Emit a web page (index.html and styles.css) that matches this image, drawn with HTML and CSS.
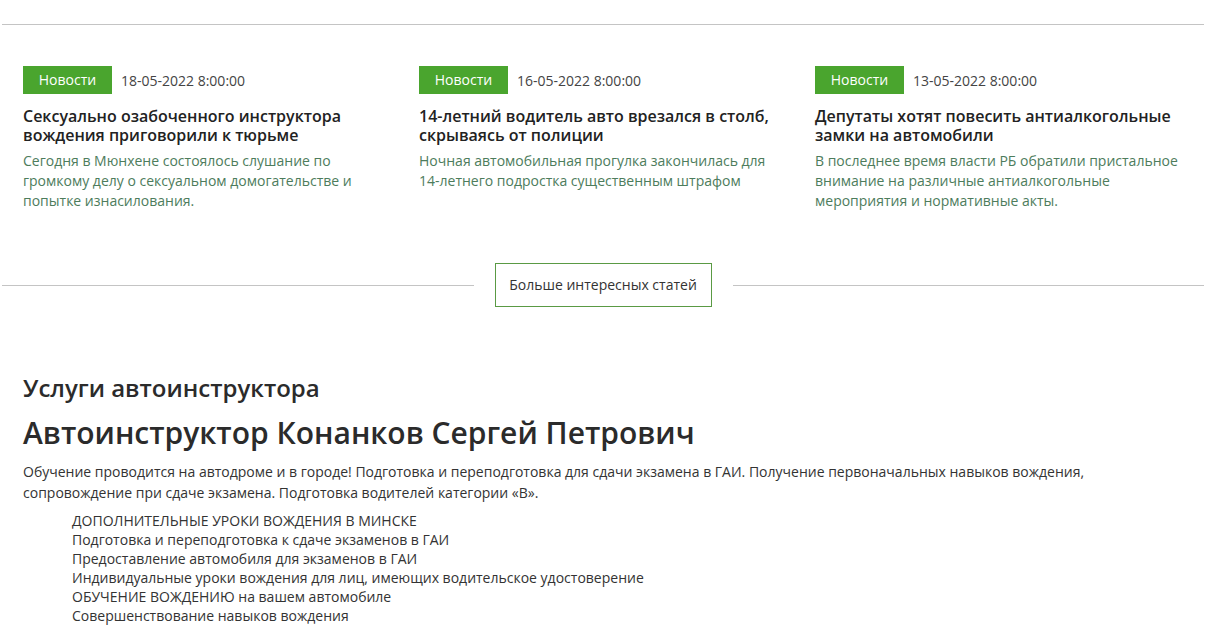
FILE: index.html
```html
<!DOCTYPE html>
<html lang="ru">
<head>
    <meta charset="UTF-8">
    <meta name="viewport" content="width=device-width, initial-scale=1.0">
    <title>Автоинструктор</title>
    <link rel="stylesheet" href="styles.css">
</head>
<body>
    <div class="page">
        <hr class="top-line">

        <!-- News cards -->
        <div class="news">
            <div class="news-item">
                <div class="news-meta">
                    <span class="badge">Новости</span>
                    <span class="date">18-05-2022 8:00:00</span>
                </div>
                <h3 class="news-title">Сексуально озабоченного инструктора вождения приговорили к тюрьме</h3>
                <p class="news-text">Сегодня в Мюнхене состоялось слушание по громкому делу о сексуальном домогательстве и попытке изнасилования.</p>
            </div>
            <div class="news-item">
                <div class="news-meta">
                    <span class="badge">Новости</span>
                    <span class="date">16-05-2022 8:00:00</span>
                </div>
                <h3 class="news-title">14-летний водитель авто врезался в столб, скрываясь от полиции</h3>
                <p class="news-text">Ночная автомобильная прогулка закончилась для 14-летнего подростка существенным штрафом</p>
            </div>
            <div class="news-item">
                <div class="news-meta">
                    <span class="badge">Новости</span>
                    <span class="date">13-05-2022 8:00:00</span>
                </div>
                <h3 class="news-title">Депутаты хотят повесить антиалкогольные замки на автомобили</h3>
                <p class="news-text">В последнее время власти РБ обратили пристальное внимание на различные антиалкогольные мероприятия и нормативные акты.</p>
            </div>
        </div>

        <!-- More button -->
        <div class="more">
            <span class="more-line"></span>
            <a class="more-btn" href="#">Больше интересных статей</a>
            <span class="more-line"></span>
        </div>

        <!-- Services -->
        <div class="services">
            <h2>Услуги автоинструктора</h2>
            <h1>Автоинструктор Конанков Сергей Петрович</h1>
            <p>Обучение проводится на автодроме и в городе! Подготовка и переподготовка для сдачи экзамена в ГАИ. Получение первоначальных навыков вождения, сопровождение при сдаче экзамена. Подготовка водителей категории «В».</p>
            <ul>
                <li>ДОПОЛНИТЕЛЬНЫЕ УРОКИ ВОЖДЕНИЯ В МИНСКЕ</li>
                <li>Подготовка и переподготовка к сдаче экзаменов в ГАИ</li>
                <li>Предоставление автомобиля для экзаменов в ГАИ</li>
                <li>Индивидуальные уроки вождения для лиц, имеющих водительское удостоверение</li>
                <li>ОБУЧЕНИЕ ВОЖДЕНИЮ на вашем автомобиле</li>
                <li>Совершенствование навыков вождения</li>
            </ul>
        </div>
    </div>
</body>
</html>
```

FILE: styles.css
```css
body {
    margin: 0;
    padding: 0;
    background: #fff;
    font-family: "Open Sans", "Liberation Sans", sans-serif;
    color: #333;
}

.page {
    padding: 24px 4px 0 2px;
}

.top-line {
    margin: 0;
    border: none;
    border-top: 1px solid #c4c4c4;
}

/* News cards */
.news {
    display: grid;
    grid-template-columns: repeat(3, 1fr);
    column-gap: 28px;
    padding: 41px 21px 0 21px;
}

.news-meta {
    display: flex;
    align-items: center;
    gap: 9px;
}

.badge {
    display: inline-block;
    width: 89px;
    height: 28px;
    line-height: 27px;
    text-align: center;
    background-color: #4aa52e;
    color: #fff;
    font-size: 14px;
}

.date {
    font-size: 14px;
    color: #444;
}

.news-title {
    margin: 13px 0 6px 0;
    font-size: 16px;
    font-weight: 600;
    line-height: 19px;
    color: #222;
}

.news-text {
    margin: 0;
    font-size: 14px;
    line-height: 20px;
    color: #4d7c5c;
}

/* More button */
.more {
    display: flex;
    align-items: center;
    gap: 21px;
    margin-top: 52px;
}

.more-line {
    flex: 1;
    border-top: 1px solid #c4c4c4;
}

.more-btn {
    display: block;
    width: 215px;
    height: 42px;
    line-height: 42px;
    text-align: center;
    border: 1px solid #5a9a44;
    font-size: 14px;
    color: #333;
    text-decoration: none;
}

/* Services */
.services {
    padding: 0 21px;
}

.services h2 {
    margin: 64px 0 0 0;
    font-size: 24px;
    font-weight: 600;
    line-height: 33px;
    color: #2b2b2b;
}

.services h1 {
    margin: 9px 0 0 0;
    font-size: 30px;
    font-weight: 600;
    line-height: 40px;
    color: #2b2b2b;
}

.services p {
    margin: 8px 0 0 0;
    font-size: 14px;
    line-height: 21px;
    color: #333;
}

.services ul {
    list-style: none;
    margin: 8px 0 0 0;
    padding-left: 49px;
}

.services li {
    font-size: 14px;
    line-height: 19px;
    color: #333;
}
```
